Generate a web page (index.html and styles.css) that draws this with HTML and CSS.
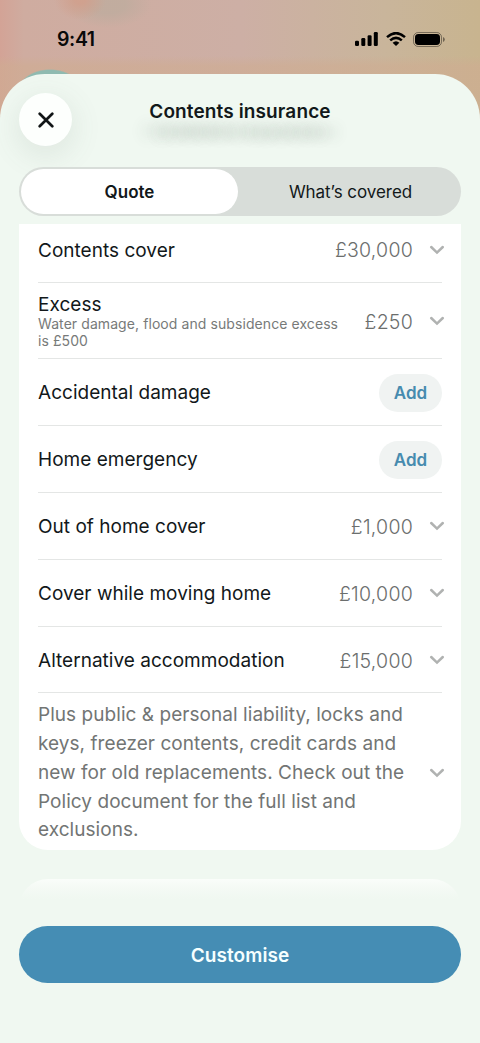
FILE: index.html
```
<!DOCTYPE html>
<html lang="en">
<head>
<meta charset="utf-8">
<meta name="viewport" content="width=device-width, initial-scale=1">
<title>Contents insurance</title>
<link rel="stylesheet" href="styles.css">
</head>
<body>
<svg class="symbols" aria-hidden="true">
  <symbol id="chevron" viewBox="0 0 16 10"><path d="M2.200 2 8 7.600l5.800-5.600" fill="none" stroke="currentColor" stroke-width="2.500" stroke-linecap="round" stroke-linejoin="miter"/></symbol>
</svg>
<div class="screen">
  <div class="status-bar">
    <span class="time">9:41</span>
    <div class="status-icons">
      <svg class="signal" viewBox="0 0 23 14"><rect x="0" y="8.700" width="4" height="5.300" rx="1.200"/><rect x="6.300" y="6" width="4" height="8" rx="1.200"/><rect x="12.600" y="3.200" width="4" height="10.800" rx="1.200"/><rect x="18.800" y="0" width="4" height="14" rx="1.200"/></svg>
      <svg class="wifi" viewBox="0 0 20 14"><g fill="none" stroke="#000" stroke-width="2.500"><path d="M1 5.100Q10-2.900 19 5.100"/><path d="M4.200 8.400Q10 3.300 15.800 8.400"/></g><path d="M6.600 10.700Q10 7.700 13.400 10.700L10 14Z"/></svg>
      <svg class="battery" viewBox="0 0 32 15"><rect x=".5" y=".5" width="28" height="14" rx="4.700" fill="none" stroke="#000" stroke-opacity=".4"/><rect x="2" y="2" width="25" height="11" rx="3.400"/><path d="M30 5v5q1.800-.7 1.800-2.500T30 5Z" opacity=".45"/></svg>
    </div>
  </div>
  <main class="sheet">
    <header class="header">
      <button class="close" aria-label="Close"><svg viewBox="0 0 16 16"><path d="m1.700 1.700 12.600 12.600M14.300 1.700 1.700 14.300" fill="none" stroke="#111516" stroke-width="2.700" stroke-linecap="round"/></svg></button>
      <h1 class="title">Contents insurance</h1>
    </header>
    <div class="tabs">
      <button class="tab tab-active">Quote</button>
      <button class="tab tab-covered">What’s covered</button>
    </div>
    <section class="card">
      <div class="row row-first"><span class="label">Contents cover</span><span class="value">£30,000</span><svg class="chevron"><use href="#chevron"/></svg></div>
      <div class="row row-excess"><div class="label"><div>Excess</div><div class="note">Water damage, flood and subsidence excess<br>is £500</div></div><span class="value">£250</span><svg class="chevron"><use href="#chevron"/></svg></div>
      <div class="row"><span class="label">Accidental damage</span><button class="add">Add</button></div>
      <div class="row"><span class="label">Home emergency</span><button class="add">Add</button></div>
      <div class="row"><span class="label">Out of home cover</span><span class="value">£1,000</span><svg class="chevron"><use href="#chevron"/></svg></div>
      <div class="row"><span class="label">Cover while moving home</span><span class="value">£10,000</span><svg class="chevron"><use href="#chevron"/></svg></div>
      <div class="row"><span class="label">Alternative accommodation</span><span class="value">£15,000</span><svg class="chevron"><use href="#chevron"/></svg></div>
      <div class="row row-more"><p class="more">Plus public &amp; personal liability, locks and<br>keys, freezer contents, credit cards and<br>new for old replacements. Check out the<br>Policy document for the full list and<br>exclusions.</p><svg class="chevron"><use href="#chevron"/></svg></div>
    </section>
    <div class="next-card"></div>
    <button class="customise">Customise</button>
  </main>
</div>
</body>
</html>
```
FILE: styles.css
```
* { box-sizing: border-box; }
body { margin: 0; font-family: Inter, Roboto, sans-serif; color: #12181a; }
button { border: 0; padding: 0; font: inherit; color: inherit; }
.symbols { position: absolute; width: 0; height: 0; }
.screen {
  width: 480px; height: 1043px; overflow: hidden;
  background:
    radial-gradient(ellipse 32px 22px at 50px 91px, #8fbab0 94%, transparent 100%),
    radial-gradient(ellipse 26px 20px at 80px 0, rgba(209,160,141,.9) 20%, rgba(207,155,135,0) 100%),
    radial-gradient(ellipse 44px 24px at 108px 4px, rgba(190,172,158,.8) 40%, rgba(188,172,158,0) 100%),
    linear-gradient(180deg, rgba(207,172,145,0) 0 56px, rgba(207,172,145,.6) 66px 130px, transparent 130px),
    linear-gradient(90deg, #d3a396 0, #cfaca0 5%, #cdafa5 50%, #c9b59b 80%, #c8b48f 100%);
}
.status-bar { height: 74px; padding: 4px 35px 0 57px; display: flex; align-items: center; justify-content: space-between; color: #090909; }
.time { font-size: 19.500px; font-weight: 600; letter-spacing: -.4px; }
.status-icons { display: flex; align-items: center; gap: 7.500px; }
.signal { width: 23px; height: 14px; }
.wifi { width: 20px; height: 14px; }
.battery { width: 32px; height: 15px; }
.sheet { height: 969px; padding: 0 19px; border-radius: 45px 45px 0 0; background: #f0f8f1; display: flex; flex-direction: column; overflow: hidden; }
.header { height: 93px; display: grid; grid-template-columns: 53px 1fr 53px; flex: none; }
.close { width: 53px; height: 53px; margin-top: 19px; border-radius: 50%; background: #fdfffd; display: grid; place-items: center; box-shadow: 0 8px 28px 4px rgba(90,105,95,.1); }
.close svg { width: 16px; height: 16px; }
.title { margin: 26px 0 0; text-align: center; font-size: 19px; line-height: 24px; font-weight: 600; letter-spacing: .12px; white-space: nowrap; text-shadow: -7px 20px 14px rgba(60,75,65,.18), 7px 20px 14px rgba(60,75,65,.18); }
.tabs { flex: none; height: 49px; padding: 2px; border-radius: 25px; background: #d8ddd9; display: grid; grid-template-columns: 217px 1fr; }
.tab { background: none; border-radius: 23px; font-size: 17px; }
.tab-active { background: #fff; font-weight: 600; }
.tab-covered { letter-spacing: -.05px; padding: 1px 0 0 4px; }
.card { flex: none; height: 626px; margin-top: 8px; padding: 0 19px; background: #fff; border-radius: 0 0 29px 29px; display: flex; flex-direction: column; }
.row { height: 66.9px; flex: none; display: flex; align-items: center; padding-top: 2px; border-bottom: 1.500px solid #e4e6e5; }
.row-first { height: 59px; padding: 0 0 6px; }
.row-excess { height: 76px; padding-top: 2px; }
.row-more { height: auto; padding-top: 8px; border: 0; }
.label { flex: 1; font-size: 19px; line-height: 23px; letter-spacing: .02px; white-space: nowrap; }
.row-excess .label { line-height: 21px; }
.label .note { font-size: 14px; line-height: 17px; letter-spacing: .08px; color: #777a79; }
.value { font-size: 19.500px; font-weight: 350; letter-spacing: .25px; color: #6b6e6d; }
.chevron { flex: none; width: 16px; height: 10px; margin: 0 -3px 1px 16px; color: #b0b2b1; }
.add { width: 63px; height: 38px; border-radius: 19px; background: #f0f3f2; color: #478baf; font-size: 17px; font-weight: 600; }
.more { flex: 1; margin: 0; font-size: 19px; line-height: 28.700px; letter-spacing: .05px; color: #727574; white-space: nowrap; }
.next-card { flex: none; height: 47px; margin-top: 29px; border-radius: 29px 29px 0 0; background: linear-gradient(#fafdfa 0, #f5faf5 8px, #f0f8f1 20px); }
.customise { flex: none; height: 57px; border-radius: 29px; background: #458db4; color: #f5ffff; font-size: 19px; font-weight: 600; letter-spacing: .05px; padding-top: 1px; }
```
